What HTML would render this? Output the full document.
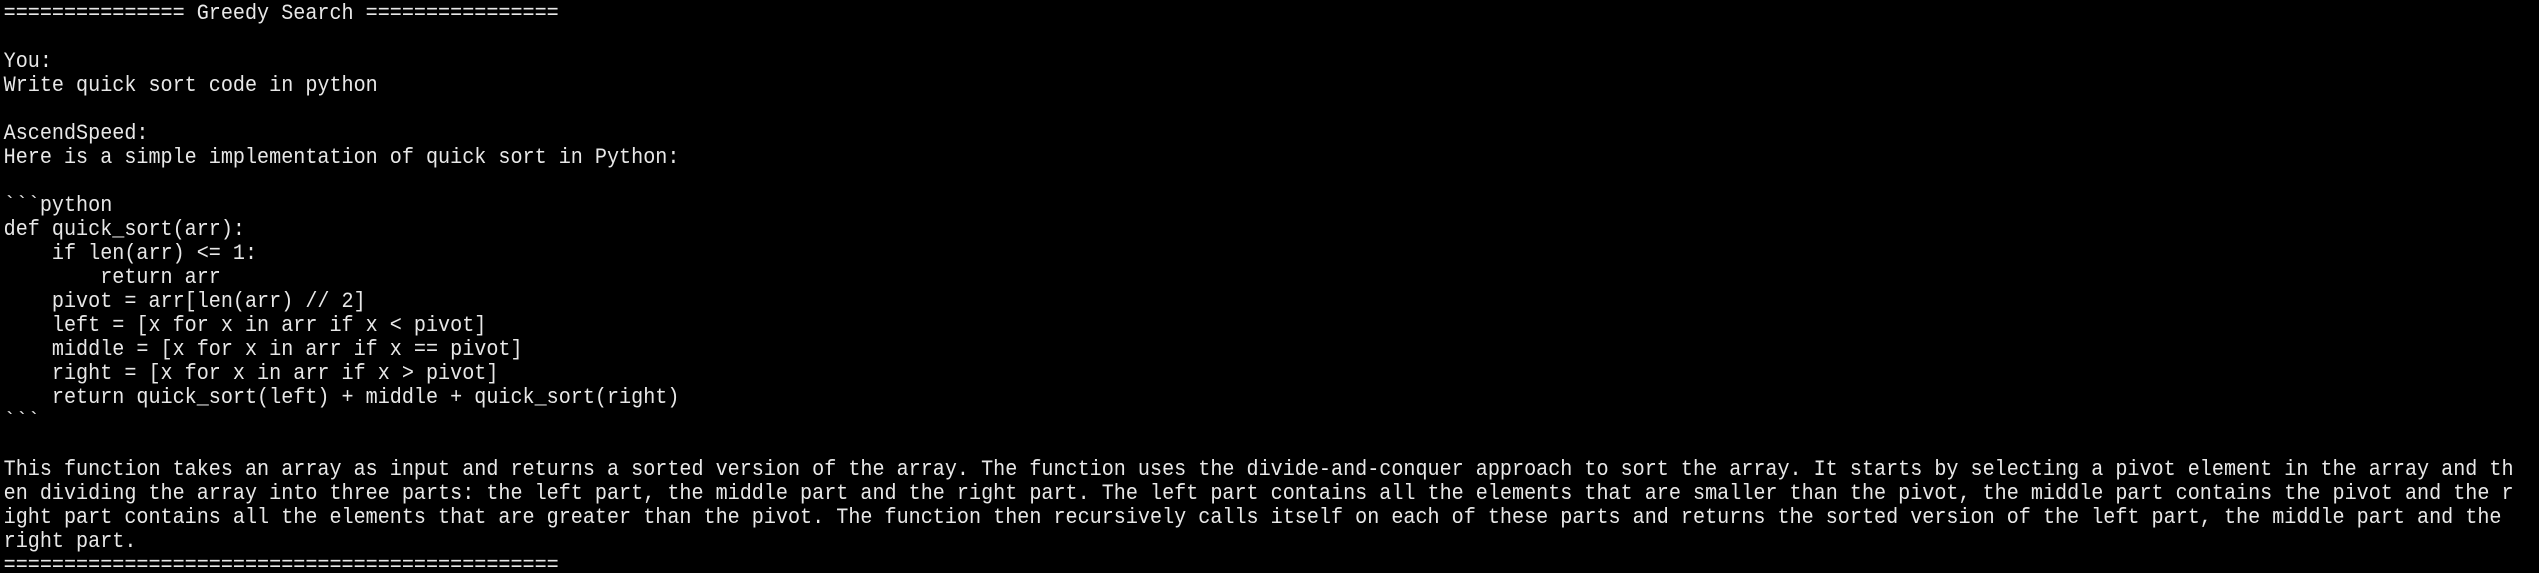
<!DOCTYPE html>
<html><head><meta charset="utf-8"><style>
html,body{margin:0;padding:0;background:#000;width:2539px;height:573px;overflow:hidden}
pre{margin:0;padding:2px 0 0 4px;font-family:"Liberation Mono",monospace;font-size:22px;line-height:24px;color:#e8e8e8;white-space:pre;transform:scaleX(0.914);transform-origin:0 0}
</style></head><body><pre>=============== Greedy Search ================

You:
Write quick sort code in python

AscendSpeed:
Here is a simple implementation of quick sort in Python:

&#96;&#96;&#96;python
def quick_sort(arr):
    if len(arr) &lt;= 1:
        return arr
    pivot = arr[len(arr) // 2]
    left = [x for x in arr if x &lt; pivot]
    middle = [x for x in arr if x == pivot]
    right = [x for x in arr if x &gt; pivot]
    return quick_sort(left) + middle + quick_sort(right)
&#96;&#96;&#96;

This function takes an array as input and returns a sorted version of the array. The function uses the divide-and-conquer approach to sort the array. It starts by selecting a pivot element in the array and th
en dividing the array into three parts: the left part, the middle part and the right part. The left part contains all the elements that are smaller than the pivot, the middle part contains the pivot and the r
ight part contains all the elements that are greater than the pivot. The function then recursively calls itself on each of these parts and returns the sorted version of the left part, the middle part and the
right part.
==============================================</pre></body></html>
